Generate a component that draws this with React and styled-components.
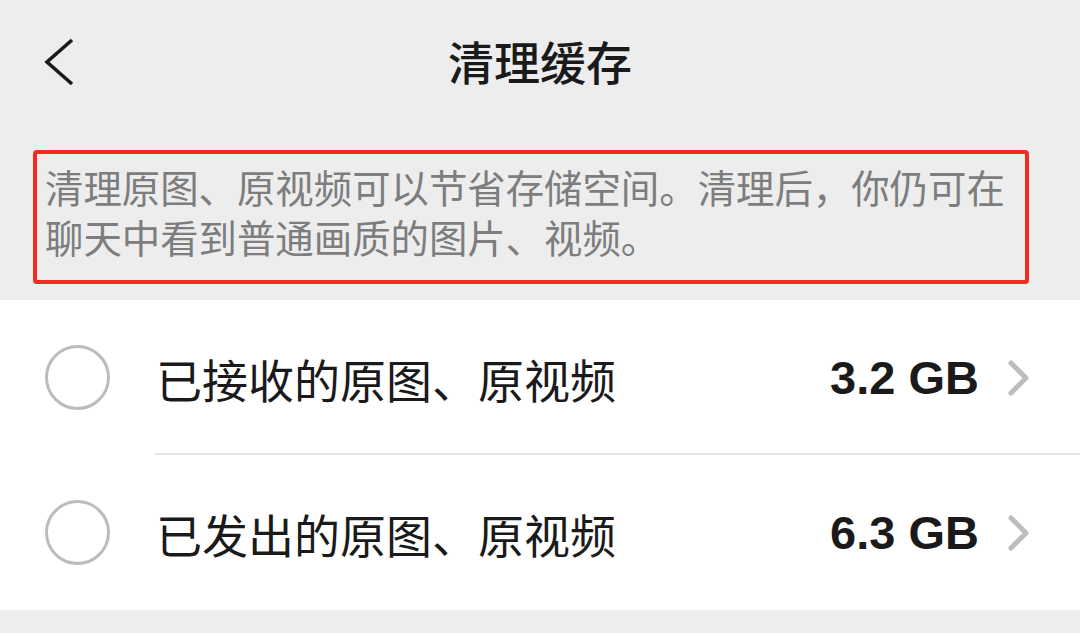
import React from 'react'
import styled, { createGlobalStyle } from 'styled-components'

const GlobalStyle = createGlobalStyle`
  html, body {
    margin: 0;
    padding: 0;
    background: #ededed;
  }
  body {
    font-family: "Noto Sans CJK SC", "Noto Sans", sans-serif;
  }
`

const items = [
  { label: '已接收的原图、原视频', size: '3.2 GB' },
  { label: '已发出的原图、原视频', size: '6.3 GB' },
]

function BackIcon() {
  return (
    <svg width="34" height="50" viewBox="0 0 34 50">
      <polyline points="29,3 4,25 29,47" fill="none" stroke="#1a1a1a" strokeWidth="3.6" strokeLinejoin="miter" />
    </svg>
  )
}

function Chevron() {
  return (
    <svg width="26" height="38" viewBox="0 0 26 38">
      <polyline points="5,4 20,19 5,34" fill="none" stroke="#bdbdbd" strokeWidth="5" strokeLinecap="round" strokeLinejoin="round" />
    </svg>
  )
}

export default function App() {
  return (
    <Page>
      <GlobalStyle />
      <Header>
        <BackButton><BackIcon /></BackButton>
        <Title>清理缓存</Title>
      </Header>
      <Notice>
        清理原图、原视频可以节省存储空间。清理后，你仍可在聊天中看到普通画质的图片、视频。
      </Notice>
      <List>
        {items.map((item, i) => (
          <Row key={item.label}>
            <Radio />
            <RowBody last={i === items.length - 1}>
              <Label>{item.label}</Label>
              <Size>{item.size}</Size>
              <Chevron />
            </RowBody>
          </Row>
        ))}
      </List>
    </Page>
  )
}

const Page = styled.div`
  width: 1080px;
  height: 633px;
  overflow: hidden;
  background: #ededed;
`
const Header = styled.div`
  position: relative;
  height: 125px;
  display: flex;
  align-items: center;
  justify-content: center;
`
const BackButton = styled.div`
  position: absolute;
  left: 43px;
  top: 37px;
  display: flex;
`
const Title = styled.div`
  font-size: 46px;
  font-weight: 500;
  color: #1a1a1a;
  margin-top: -5px;
`
const Notice = styled.div`
  margin: 25px 51px 16px 33px;
  border: 4px solid #f22a1f;
  border-radius: 4px;
  padding: 7px 8px 19px 8px;
  font-size: 38.4px;
  line-height: 50px;
  color: #7d7d7d;
`
const List = styled.div`
  background: #ffffff;
  height: 310px;
`
const Row = styled.div`
  height: 155px;
  display: flex;
  align-items: center;
  padding-left: 45px;
`
const Radio = styled.div`
  width: 59px;
  height: 59px;
  border: 3px solid #bcbcbc;
  border-radius: 50%;
  flex-shrink: 0;
  margin-right: 45px;
`
const RowBody = styled.div`
  flex: 1;
  height: 100%;
  display: flex;
  align-items: center;
  padding-right: 48px;
  box-shadow: ${p => (p.last ? 'none' : 'inset 0 -2px 0 #e6e6e6')};
  padding-left: 1px;
`
const Label = styled.div`
  flex: 1;
  font-size: 46px;
  color: #1a1a1a;
`
const Size = styled.div`
  font-family: "Liberation Sans", Arial, sans-serif;
  font-weight: 700;
  font-size: 47px;
  color: #1a1a1a;
  margin-right: 27px;
`
